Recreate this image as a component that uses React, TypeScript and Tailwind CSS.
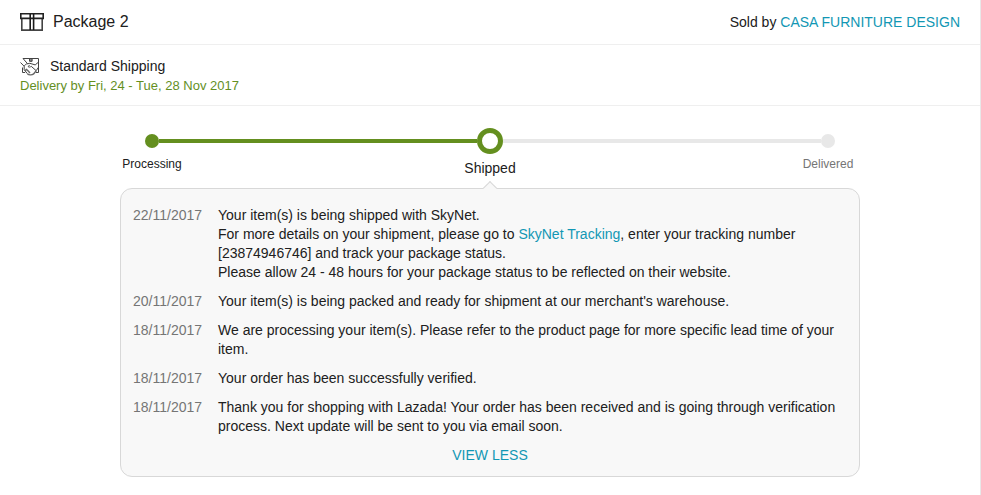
import { Fragment, type ReactNode } from 'react';

interface HistoryEntry {
  date: string;
  message: ReactNode;
}

interface Step {
  label: string;
  state: 'done' | 'current' | 'pending';
}

const steps: Step[] = [
  { label: 'Processing', state: 'done' },
  { label: 'Shipped', state: 'current' },
  { label: 'Delivered', state: 'pending' },
];

const history: HistoryEntry[] = [
  {
    date: '22/11/2017',
    message: (
      <>
        Your item(s) is being shipped with SkyNet.
        <br />
        For more details on your shipment, please go to{' '}
        <a href="#tracking" className="text-[#1297b4]">SkyNet Tracking</a>, enter your tracking
        number [23874946746] and track your package status.
        <br />
        Please allow 24 - 48 hours for your package status to be reflected on their website.
      </>
    ),
  },
  {
    date: '20/11/2017',
    message: "Your item(s) is being packed and ready for shipment at our merchant's warehouse.",
  },
  {
    date: '18/11/2017',
    message:
      'We are processing your item(s). Please refer to the product page for more specific lead time of your item.',
  },
  { date: '18/11/2017', message: 'Your order has been successfully verified.' },
  {
    date: '18/11/2017',
    message:
      'Thank you for shopping with Lazada! Your order has been received and is going through verification process. Next update will be sent to you via email soon.',
  },
];

const dotStyles = {
  done: 'size-3.5 bg-[#648f1f]',
  current: 'size-[26px] border-5 border-[#648f1f] bg-white',
  pending: 'size-3.5 bg-[#e8e8e8]',
};

const labelStyles = {
  done: 'text-xs leading-5',
  current: 'pt-1 text-sm leading-5',
  pending: 'text-xs leading-5 text-[#757575]',
};

function PackageIcon() {
  return (
    <svg width="24" height="18" viewBox="0 0 24 18" fill="none" aria-hidden="true">
      <path d="M1.8 5.5v11.6h20.4V5.5" stroke="#444" strokeWidth="1.6" />
      <path d="M.8 .8h22.4v4.6H.8z" stroke="#222" strokeWidth="1.6" />
      <path d="M10.2 1v16M13.6 1v16" stroke="#1a1a1a" strokeWidth="1.6" />
    </svg>
  );
}

function HandshakeIcon() {
  return (
    <svg width="20" height="19" viewBox="0 0 20 19" fill="none" stroke="#444" aria-hidden="true">
      <path d="M3 1.5h15.5v14h-2.6M2.5 10.5v5h2.6" />
      <path d="M9.5 1.5h2.6v2.8H9.5z" fill="#888" />
      <path d="M3 1.5l4.6 5.3M.5 5.5l3.7 3.8" />
      <path d="M4.2 9.3c.9-1.7 1.9-2.6 3.4-2.5L9.8 6.3l5.4 1.6 3.3-2.8" />
      <path d="M9.6 7.9l-1.4 1.8c1 .7 2 .4 3-.4l5 4.4 2.3-3.5" />
      <path d="M4.2 9.3v3.4l3.2 4" />
      <path d="M5 13.6l1.5-1.2 1.7 1.6 1.8 1.9M7.4 16.7c1.4 1.4 4.4 1.7 6.2.2l2.6-3.2" stroke="#666" strokeWidth="1.4" />
    </svg>
  );
}

function ProgressTracker() {
  return (
    <div>
      <div className="flex items-center px-[25px]">
        {steps.map((step, index) => (
          <Fragment key={step.label}>
            {index > 0 && (
              <span
                className={`h-1 flex-1 ${step.state === 'pending' ? 'bg-[#e8e8e8]' : 'bg-[#648f1f]'}`}
              />
            )}
            <span className={`shrink-0 rounded-full ${dotStyles[step.state]}`} />
          </Fragment>
        ))}
      </div>
      <ol className="flex justify-between">
        {steps.map((step) => (
          <li
            key={step.label}
            aria-current={step.state === 'current' ? 'step' : undefined}
            className={`w-16 text-center ${labelStyles[step.state]}`}
          >
            {step.label}
          </li>
        ))}
      </ol>
    </div>
  );
}

function ShippingHistory() {
  return (
    <div className="relative mt-2.5 rounded-xl border border-[#d8d8d8] bg-[#f8f8f8] px-3 pt-[17px] pb-[11px] leading-[19px]">
      <span className="absolute -top-1.5 left-1/2 size-2.5 -translate-x-1/2 rotate-45 border-t border-l border-[#d8d8d8] bg-[#f8f8f8]" />
      <ol className="flex flex-col gap-2.5">
        {history.map((entry, index) => (
          <li key={index} className="flex">
            <time className="w-[85px] shrink-0 text-[#757575]">{entry.date}</time>
            <p className="min-w-0 flex-1">{entry.message}</p>
          </li>
        ))}
      </ol>
      <button type="button" className="mx-auto mt-2.5 block text-[#1297b4]">
        VIEW LESS
      </button>
    </div>
  );
}

export default function App() {
  return (
    <main className="min-h-screen border-r border-[#e8e8e8] bg-white font-['Liberation_Sans',Arial,sans-serif] text-sm text-[#202020]">
      <header className="flex items-center justify-between border-b border-[#efefef] px-5 py-2.5">
        <h2 className="flex items-center gap-[9px] text-base leading-6">
          <PackageIcon />
          Package 2
        </h2>
        <p>
          Sold by <a href="#seller" className="text-[#1297b4]">CASA FURNITURE DESIGN</a>
        </p>
      </header>

      <section className="border-b border-[#efefef] px-5 pt-[11px] pb-[9px]">
        <h3 className="flex items-center gap-2.5 leading-5">
          <HandshakeIcon />
          Standard Shipping
        </h3>
        <p className="text-[13px] leading-5 text-[#648f1f]">Delivery by Fri, 24 - Tue, 28 Nov 2017</p>
      </section>

      <section className="mx-auto w-full max-w-[740px] pt-[22px] pb-4">
        <ProgressTracker />
        <ShippingHistory />
      </section>
    </main>
  );
}
